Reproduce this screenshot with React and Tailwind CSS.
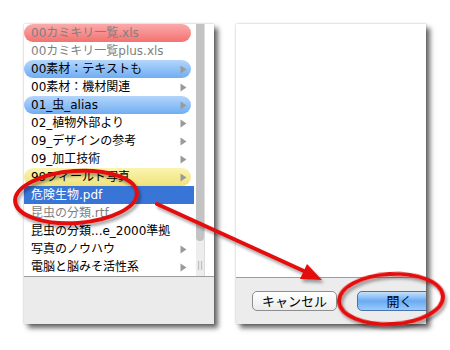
import React from "react";

const rows = [
  { t: "00カミキリ一覧.xls", gray: true, label: "red" },
  { t: "00カミキリ一覧plus.xls", gray: true },
  { t: "00素材：テキストも", arrow: true, label: "blue" },
  { t: "00素材：機材関連", arrow: true },
  { t: "01_虫_alias", arrow: true, label: "blue" },
  { t: "02_植物外部より", arrow: true },
  { t: "09_デザインの参考", arrow: true },
  { t: "09_加工技術", arrow: true },
  { t: "99フィールド写真", arrow: true, label: "yellow" },
  { t: "危険生物.pdf", selected: true },
  { t: "昆虫の分類.rtf", gray: true },
  { t: "昆虫の分類...e_2000準拠" },
  { t: "写真のノウハウ", arrow: true },
  { t: "電脳と脳みそ活性系", arrow: true },
];

function Arrow({ white }) {
  return (
    <svg width="7" height="9" viewBox="0 0 7 9" className="shrink-0">
      <path d="M0.5 0.5 L6.5 4.5 L0.5 8.5 Z" fill={white ? "#ffffff" : "#9a9a9a"} />
    </svg>
  );
}

function Row({ r }) {
  let cls = "h-[18px] flex items-center justify-between pl-[7px] pr-[4px] ";
  if (r.selected) cls += "mr-[2px] bg-[#3875d7] text-white";
  else if (r.label === "red")
    cls += "mr-[5px] rounded-full bg-gradient-to-b from-[#fba9a9] to-[#f27272]";
  else if (r.label === "blue")
    cls += "mr-[5px] rounded-full bg-gradient-to-b from-[#b4d6fb] to-[#6fadf3]";
  else if (r.label === "yellow")
    cls += "mr-[5px] rounded-full bg-gradient-to-b from-[#fbf4b0] to-[#efe27a]";
  else cls += "mr-[5px]";
  const textCls = r.selected ? "text-white" : r.gray ? "text-[#7f7f7f]" : "text-black";
  return (
    <div className={cls}>
      <span className={"whitespace-nowrap " + textCls}>{r.t}</span>
      {r.arrow && <Arrow />}
    </div>
  );
}

export default function App() {
  return (
    <div
      className="relative w-[450px] h-[350px] bg-white overflow-hidden"
      style={{}}
    >
      <div className="flex pt-[24px] pl-[24px] gap-[22px]">
        {/* Left panel */}
        <div className="w-[190px] h-[300px] bg-white flex flex-col shadow-[4px_4px_5px_rgba(0,0,0,0.6),0_0_2px_rgba(0,0,0,0.25)]">
          <div className="h-[252px] flex">
            <div className="w-[172px] flex flex-col text-[12px] leading-[18px] font-['DejaVu_Sans','Noto_Sans_CJK_JP',sans-serif]">
              {rows.map((r, i) => (
                <Row key={i} r={r} />
              ))}
            </div>
            <div className="w-[8px] bg-[#ededed] flex flex-col items-center">
              <div className="w-[8px] h-[217px] bg-[#c3c3c3] rounded-b-full" />
              <div className="mt-[20px] text-[9px] leading-[9px] text-[#a8a8a8] font-['DejaVu_Sans',sans-serif]">
                ||
              </div>
            </div>
            <div className="w-[10px] border-l border-[#dcdcdc] bg-white" />
          </div>
          <div className="flex-1 border-t border-[#9c9c9c] bg-[#ebebeb]" />
        </div>

        {/* Right panel */}
        <div className="w-[190px] h-[300px] bg-white flex flex-col overflow-hidden shadow-[4px_4px_5px_rgba(0,0,0,0.6),0_0_2px_rgba(0,0,0,0.25)]">
          <div className="h-[253px]" />
          <div className="flex-1 border-t border-[#9c9c9c] bg-[#ececec] flex items-start pt-[13px] pl-[16px] gap-[20px]">
            <div className="shrink-0 w-[85px] h-[20px] rounded-[5px] border border-[#8e8e8e] bg-gradient-to-b from-white to-[#ececec] flex items-center justify-center text-[13px] text-black font-['Noto_Sans_CJK_JP',sans-serif]">
              キャンセル
            </div>
            <div className="shrink-0 w-[85px] h-[20px] rounded-[5px] border border-[#4a73ad] bg-gradient-to-b from-[#c6e1fb] via-[#6aaaf2] to-[#99cbfb] flex items-center justify-center text-[13px] text-black font-['Noto_Sans_CJK_JP',sans-serif]">
              開く
            </div>
          </div>
        </div>
      </div>

      {/* Red annotations */}
      <svg
        className="absolute inset-0 pointer-events-none"
        width="450"
        height="350"
        viewBox="0 0 450 350"
      >
        <defs>
          <filter id="ds" x="-20%" y="-20%" width="140%" height="140%">
            <feDropShadow dx="2" dy="3" stdDeviation="1.5" floodColor="#000" floodOpacity="0.35" />
          </filter>
        </defs>
        <g filter="url(#ds)">
          <ellipse
            cx="76"
            cy="197"
            rx="61"
            ry="26"
            transform="rotate(-4 76 197)"
            fill="none"
            stroke="#e3100f"
            strokeWidth="4"
          />
          <line x1="157" y1="204" x2="306" y2="272" stroke="#e3100f" strokeWidth="4" strokeLinecap="round" />
          <polygon points="322,280 300,279 307,264" fill="#e3100f" />
          <ellipse
            cx="391"
            cy="299"
            rx="52"
            ry="25"
            transform="rotate(-3 391 299)"
            fill="none"
            stroke="#e3100f"
            strokeWidth="4"
          />
        </g>
      </svg>
    </div>
  );
}
